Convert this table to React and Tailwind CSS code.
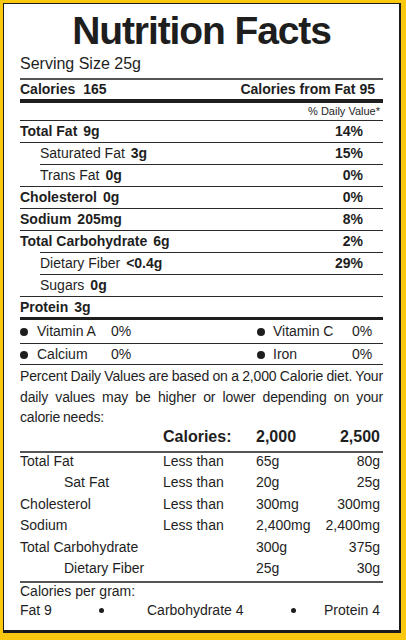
import React from "react";

const nutrients = [
  { name: "Total Fat", amt: "9g", pct: "14%", main: true, ruleIndent: false },
  { name: "Saturated Fat", amt: "3g", pct: "15%", main: false, ruleIndent: true },
  { name: "Trans Fat", amt: "0g", pct: "0%", main: false, ruleIndent: false },
  { name: "Cholesterol", amt: "0g", pct: "0%", main: true, ruleIndent: false },
  { name: "Sodium", amt: "205mg", pct: "8%", main: true, ruleIndent: false },
  { name: "Total Carbohydrate", amt: "6g", pct: "2%", main: true, ruleIndent: true },
  { name: "Dietary Fiber", amt: "<0.4g", pct: "29%", main: false, ruleIndent: true },
  { name: "Sugars", amt: "0g", pct: "", main: false, ruleIndent: false },
];

const limits = [
  { name: "Total Fat", sub: false, less: "Less than", a: "65g", b: "80g" },
  { name: "Sat Fat", sub: true, less: "Less than", a: "20g", b: "25g" },
  { name: "Cholesterol", sub: false, less: "Less than", a: "300mg", b: "300mg" },
  { name: "Sodium", sub: false, less: "Less than", a: "2,400mg", b: "2,400mg" },
  { name: "Total Carbohydrate", sub: false, less: "", a: "300g", b: "375g" },
  { name: "Dietary Fiber", sub: true, less: "", a: "25g", b: "30g" },
];

function Dot() {
  return <span className="inline-block w-[8px] h-[8px] rounded-full bg-[#1e1e1e]" />;
}

export default function App() {
  return (
    <div className="w-[406px] h-[640px] bg-[#f9c80f] pt-[3px] pl-[3px] overflow-hidden">
      <div className="w-[398px] h-[630px] bg-white border-l border-t border-r-2 border-b-[3px] border-[#1c1c1c] px-[16px] text-[#1e1e1e] font-['Liberation_Sans',Arial,sans-serif]">
        <h1 className="pt-[5px] text-[39px] leading-[44px] font-bold text-center tracking-[-1.1px]">
          Nutrition Facts
        </h1>
        <div className="text-[16px] leading-[22px]">Serving Size 25g</div>
        <div className="mt-[3px] h-[2px] bg-[#555]" />
        <div className="flex items-center justify-between h-[18px] pr-[8px] text-[14px] font-bold">
          <span>
            Calories<span className="ml-[8px]">165</span>
          </span>
          <span>Calories from Fat 95</span>
        </div>
        <div className="mt-px h-[4px] bg-[#1e1e1e]" />
        <div className="pr-[3px] text-right text-[11px] leading-[17px]">% Daily Value*</div>
        <div className="h-px bg-[#2b2b2b]" />

        {nutrients.map((n) => (
          <div key={n.name}>
            <div className={n.main ? "flex items-center justify-between h-[21px] pr-[20px] text-[14px]" : "flex items-center justify-between h-[21px] pl-[20px] pr-[20px] text-[14px]"}>
              <span>
                <span className={n.main ? "font-bold" : ""}>{n.name}</span>
                <span className="ml-[6px] font-bold">{n.amt}</span>
              </span>
              <span className="font-bold">{n.pct}</span>
            </div>
            <div className={n.ruleIndent ? "ml-[20px] h-px bg-[#2b2b2b]" : "h-px bg-[#2b2b2b]"} />
          </div>
        ))}

        <div className="flex items-center h-[20px] text-[14px] font-bold">
          Protein<span className="ml-[6px]">3g</span>
        </div>
        <div className="h-[3px] bg-[#1e1e1e]" />

        <div className="grid grid-cols-[237px_1fr] items-center h-[23px] text-[14px]">
          <div className="flex items-center">
            <Dot />
            <span className="ml-[9px] w-[74px]">Vitamin A</span>
            <span>0%</span>
          </div>
          <div className="flex items-center">
            <Dot />
            <span className="ml-[8px] w-[79px]">Vitamin C</span>
            <span>0%</span>
          </div>
        </div>
        <div className="h-px bg-[#2b2b2b]" />
        <div className="grid grid-cols-[237px_1fr] items-center h-[20px] text-[14px]">
          <div className="flex items-center">
            <Dot />
            <span className="ml-[9px] w-[74px]">Calcium</span>
            <span>0%</span>
          </div>
          <div className="flex items-center">
            <Dot />
            <span className="ml-[8px] w-[79px]">Iron</span>
            <span>0%</span>
          </div>
        </div>
        <div className="h-px bg-[#2b2b2b]" />

        <p className="pt-[1px] text-[14px] leading-[20.5px] text-justify tracking-[-0.15px] [word-spacing:-1px]">
          Percent Daily Values are based on a 2,000 Calorie diet. Your daily values may be higher or lower depending on your calorie needs:
        </p>

        <div className="grid grid-cols-[143px_93px_1fr_auto] h-[18px] leading-[18px] pr-[3px] text-[16px] font-bold">
          <span />
          <span>Calories:</span>
          <span>2,000</span>
          <span>2,500</span>
        </div>
        <div className="mt-[5px] h-[2px] bg-[#555]" />
        <div className="-mt-[2px] text-[14px] leading-[21.5px]">
          {limits.map((r) => (
            <div key={r.name} className="grid grid-cols-[143px_93px_1fr_auto] pr-[3px]">
              <span className={r.sub ? "pl-[44px]" : ""}>{r.name}</span>
              <span>{r.less}</span>
              <span>{r.a}</span>
              <span className="text-right">{r.b}</span>
            </div>
          ))}
        </div>
        <div className="mt-[1px] h-[2px] bg-[#555]" />
        <div className="text-[14px] leading-[15px] pt-[1px]">Calories per gram:</div>
        <div className="flex items-center h-[24px] pr-[3px] text-[14px]">
          <span className="w-[79px]">Fat 9</span>
          <span className="inline-block w-[5px] h-[5px] rounded-full bg-[#1e1e1e]" />
          <span className="ml-[43px]">Carbohydrate 4</span>
          <span className="ml-[47px] inline-block w-[5px] h-[5px] rounded-full bg-[#1e1e1e]" />
          <span className="ml-auto">Protein 4</span>
        </div>
      </div>
    </div>
  );
}
